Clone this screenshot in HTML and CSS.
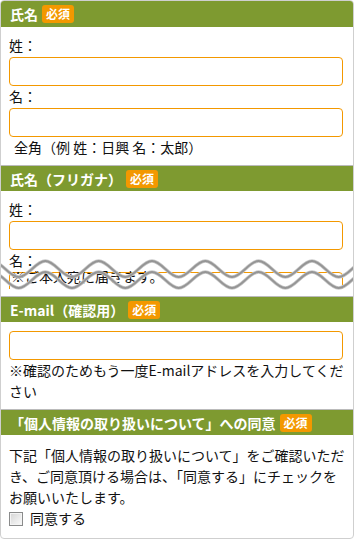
FILE: index.html
```html
<!DOCTYPE html>
<html lang="ja">
<head>
<meta charset="utf-8">
<title>フォーム</title>
<link rel="stylesheet" href="styles.css">
</head>
<body>
<div class="form">
  <section class="sec">
    <h2 class="sec-head">氏名<span class="req">必須</span></h2>
    <div class="sec-body">
      <label class="lbl">姓：</label>
      <input class="field" type="text">
      <label class="lbl">名：</label>
      <input class="field" type="text">
      <p class="hint">全角（例 姓：日興 名：太郎）</p>
    </div>
  </section>

  <section class="sec">
    <h2 class="sec-head">氏名（フリガナ）<span class="req">必須</span></h2>
    <div class="sec-body">
      <label class="lbl">姓：</label>
      <input class="field" type="text">
      <label class="lbl">名：</label>
      <div class="cut">
        <div class="field ghost"></div>
        <p class="cut-text">※ご本人宛に届きます。</p>
      </div>
    </div>
  </section>

  <section class="sec">
    <h2 class="sec-head">E-mail（確認用）<span class="req">必須</span></h2>
    <div class="sec-body mail">
      <input class="field first" type="text">
      <p class="note">※確認のためもう一度E-mailアドレスを入力してください</p>
    </div>
  </section>

  <section class="sec">
    <h2 class="sec-head">「個人情報の取り扱いについて」への同意<span class="req">必須</span></h2>
    <div class="sec-body last">
      <p class="note">下記「個人情報の取り扱いについて」をご確認いただき、ご同意頂ける場合は、「同意する」にチェックをお願いいたします。</p>
      <label class="agree"><input class="chk" type="checkbox"><span>同意する</span></label>
    </div>
  </section>

  <svg class="wave" width="356" height="50" viewBox="0 0 356 50" aria-hidden="true">
    <defs>
      <path id="wv" d="M -8 11 C 1.71 11 8.96 27 18.67 27 S 35.62 11 45.33 11 S 62.29 27 72 27 S 88.96 11 98.67 11 S 115.62 27 125.33 27 S 142.29 11 152 11 S 168.96 27 178.67 27 S 195.62 11 205.33 11 S 222.29 27 232 27 S 248.96 11 258.67 11 S 275.62 27 285.33 27 S 302.29 11 312 11 S 328.96 27 338.67 27 S 355.62 11 365.33 11"/>
    </defs>
    <g fill="none" stroke-linecap="round">
      <use href="#wv" stroke="#c8c8c8" stroke-width="3.4"/>
      <use href="#wv" stroke="#959595" stroke-width="1.8"/>
      <use href="#wv" transform="translate(0 11)" stroke="#c8c8c8" stroke-width="3.4"/>
      <use href="#wv" transform="translate(0 11)" stroke="#959595" stroke-width="1.8"/>
    </g>
  </svg>
</div>
</body>
</html>
```
FILE: styles.css
```css
html, body {
  margin: 0;
  padding: 0;
  background: #fff;
}

body {
  font-family: "Noto Sans CJK JP", "Noto Sans", sans-serif;
  font-size: 14px;
  color: #111;
}

.form {
  position: relative;
  box-sizing: border-box;
  width: 354px;
  border: 1px solid #cfcfcf;
  border-radius: 4px;
  overflow: hidden;
  background: #fff;
}

.sec-head {
  display: flex;
  align-items: center;
  box-sizing: border-box;
  height: 26px;
  margin: 0;
  padding: 0 0 0 9px;
  background: #7e9a30;
  color: #fff;
  font-size: 14px;
  font-weight: bold;
  line-height: 26px;
  border-top: 1px solid #bbb;
}

.sec:first-child .sec-head {
  border-top: 0;
}

.req {
  display: inline-block;
  margin-left: 4px;
  padding: 0 4px;
  height: 18px;
  line-height: 18px;
  border-radius: 3px;
  background: #f39800;
  color: #fff;
  font-size: 12px;
  font-weight: bold;
}

.sec-body {
  padding: 8px 8px 7px 8px;
}

.sec-body.mail {
  padding-top: 9px;
}

.sec-body.last {
  padding-top: 10px;
  padding-bottom: 9px;
}

.lbl {
  display: block;
  line-height: 21px;
}

.field {
  display: block;
  box-sizing: border-box;
  width: calc(100% - 2px);
  height: 29px;
  margin: 1px 0 0 0;
  padding: 0 4px;
  border: 1px solid #f39800;
  border-radius: 4px;
  background: #fff;
  font: inherit;
}

.field.first {
  margin-top: 0;
}

.hint {
  margin: 0;
  padding-left: 5px;
  line-height: 21px;
}

.note {
  margin: 0;
  line-height: 21px;
}

.cut {
  display: grid;
  height: 18px;
  overflow: hidden;
}

.cut > * {
  grid-area: 1 / 1;
}

.ghost {
  height: 40px;
}

.cut-text {
  margin: -5px 0 0 0;
  padding-left: 2px;
  line-height: 21px;
}

.agree {
  display: flex;
  align-items: center;
  gap: 7px;
  line-height: 21px;
}

.chk {
  appearance: none;
  -webkit-appearance: none;
  box-sizing: border-box;
  width: 14px;
  height: 14px;
  margin: 0;
  border: 1px solid #8a8b8b;
  background: linear-gradient(135deg, #d4d4d4 0%, #ececec 60%, #fafafa 100%);
  box-shadow: inset 0 0 0 1px #f4f4f4;
}

.wave {
  position: absolute;
  left: -1px;
  top: 249px;
  pointer-events: none;
}
```
